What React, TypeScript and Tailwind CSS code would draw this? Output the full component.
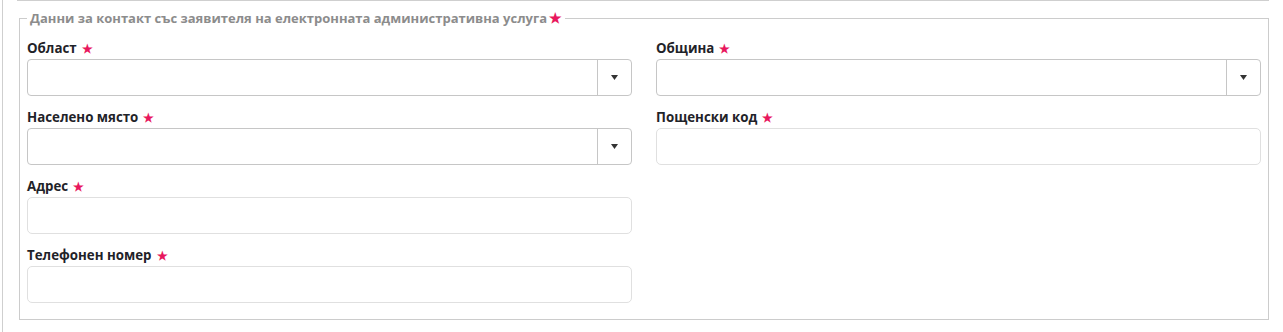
const fields: { label: string; kind: "select" | "text" | "empty" }[] = [
  { label: "Област", kind: "select" },
  { label: "Община", kind: "select" },
  { label: "Населено място", kind: "select" },
  { label: "Пощенски код", kind: "text" },
  { label: "Адрес", kind: "text" },
  { label: "", kind: "empty" },
  { label: "Телефонен номер", kind: "text" },
  { label: "", kind: "empty" },
];

function Star() {
  return <span className="ml-[5px] text-[12px] text-[#e8175d]">★</span>;
}

function Field({ label, kind }: { label: string; kind: "select" | "text" | "empty" }) {
  if (kind === "empty") return <div />;
  return (
    <div className="mb-[12px]">
      <label className="block h-[18px] mb-[2px] text-[13.3px] leading-[18px] font-bold text-[#1f2329]">
        {label}
        <Star />
      </label>
      {kind === "select" ? (
        <div className="flex h-[37px] rounded-[4px] border border-[#c6c6c6] bg-white">
          <div className="flex-1" />
          <div className="flex w-[34px] items-center justify-center border-l border-[#c6c6c6]">
            <svg width="7" height="5" viewBox="0 0 7 5">
              <path d="M0 0h7L3.5 5z" fill="#333" />
            </svg>
          </div>
        </div>
      ) : (
        <input className="block h-[37px] w-full rounded-[5px] border border-[#e0e0e0] bg-white outline-none" />
      )}
    </div>
  );
}

export default function App() {
  return (
    <div className="h-[332px] w-[1283px] bg-white font-['Open_Sans',sans-serif]">
      <div className="ml-[2px] h-[332px] border-l border-[#cfcfcf] pl-[14px]">
        <div className="h-px w-[1252px] bg-[#cfcfcf]" />
        <fieldset className="ml-[2px] mt-[8px] w-[1250px] border border-[#cccccc] px-[7px] pb-[4px]">
          <legend className="px-[3px] text-[13px] leading-[18px] font-bold text-[#8c8c8c]">
            Данни за контакт със заявителя на електронната административна услуга
            <span className="ml-[2px] text-[14px] text-[#e8175d]">★</span>
          </legend>
          <div className="mt-[12px] grid grid-cols-2 gap-x-[24px]">
            {fields.map((f, i) => (
              <Field key={i} label={f.label} kind={f.kind} />
            ))}
          </div>
        </fieldset>
      </div>
    </div>
  );
}
